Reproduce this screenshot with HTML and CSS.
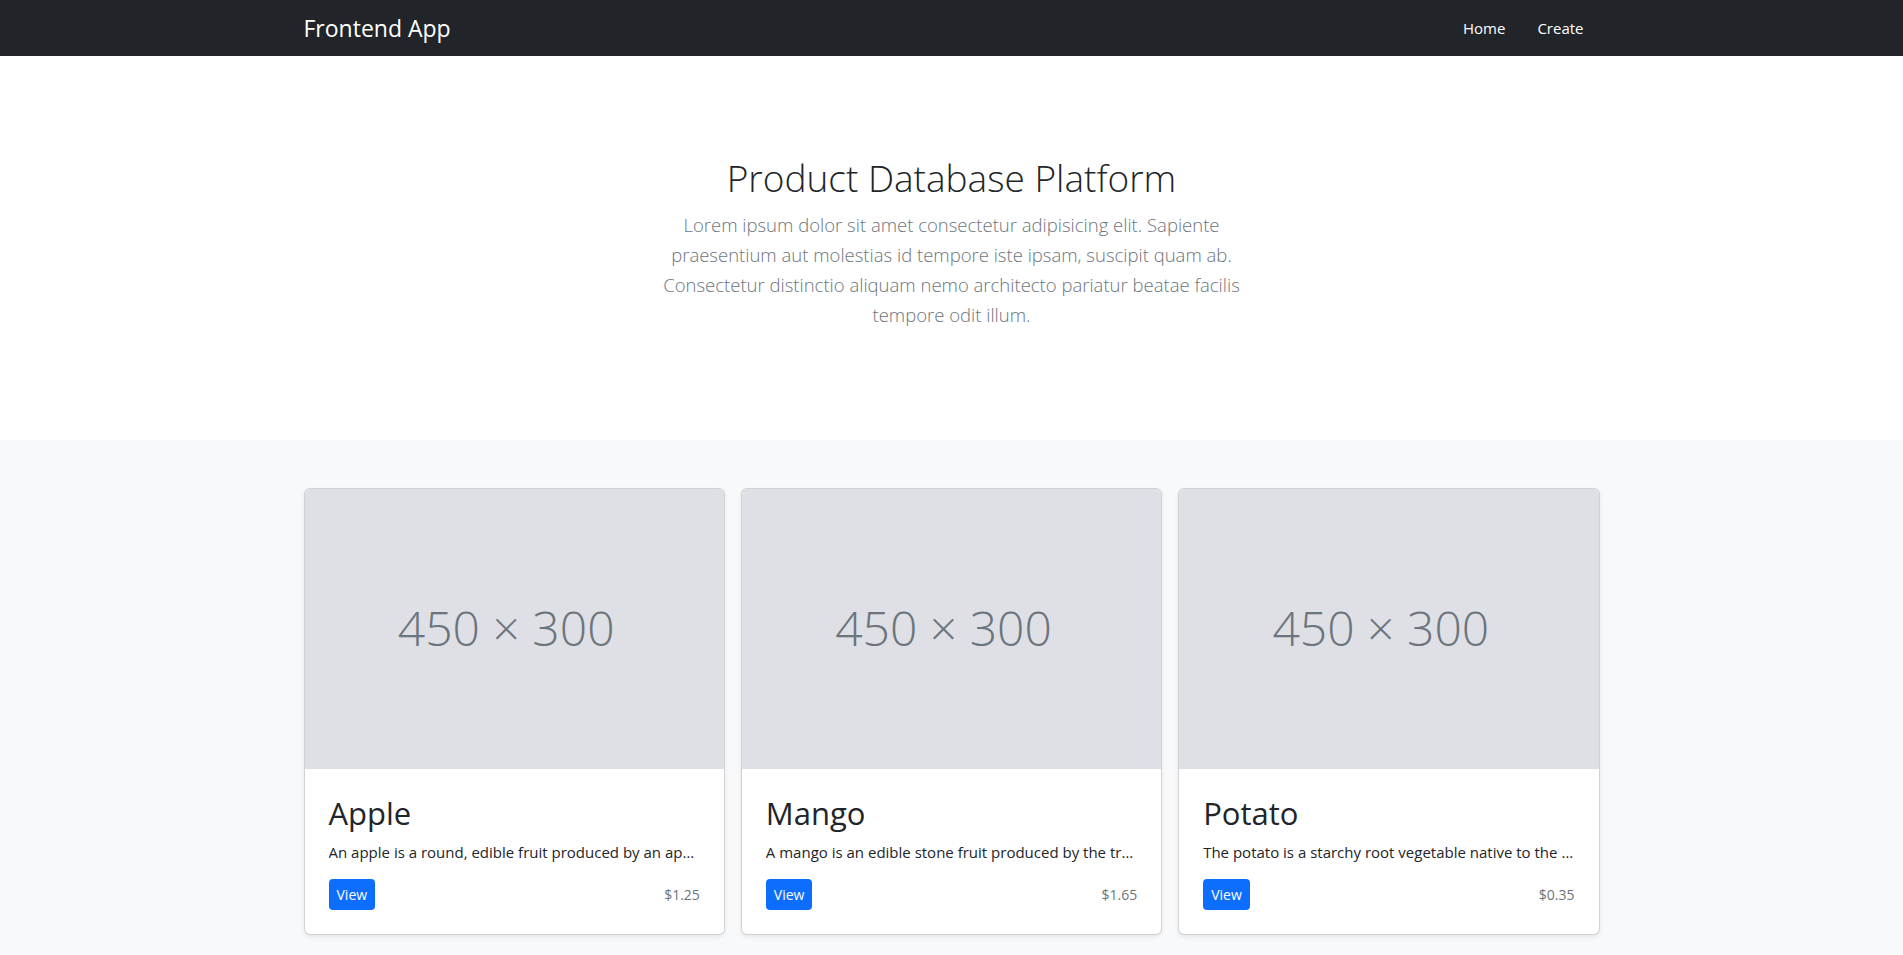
FILE: index.html
```html
<!DOCTYPE html>
<html lang="en">
<head>
<meta charset="utf-8">
<title>Frontend App</title>
<link rel="stylesheet" href="styles.css">
</head>
<body>
<header class="navbar">
  <div class="container nav-inner">
    <a class="brand" href="#">Frontend App</a>
    <nav class="nav-links">
      <a class="nav-link" href="#">Home</a>
      <a class="nav-link" href="#">Create</a>
    </nav>
  </div>
</header>
<main>
  <section class="hero container">
    <div class="hero-col">
      <h1 class="hero-title">Product Database Platform</h1>
      <p class="lead">Lorem ipsum dolor sit amet consectetur adipisicing elit. Sapiente praesentium aut molestias id tempore iste ipsam, suscipit quam ab. Consectetur distinctio aliquam nemo architecto pariatur beatae facilis tempore odit illum.</p>
    </div>
  </section>
  <div class="album">
    <div class="container">
      <div class="cards">
        <div class="card">
          <div class="card-img"><span>450 × 300</span></div>
          <div class="card-body">
            <h2 class="card-title">Apple</h2>
            <p class="card-text">An apple is a round, edible fruit produced by an apple tree (Malus domestica).</p>
            <div class="card-foot">
              <a class="btn" href="#">View</a>
              <small class="price">$1.25</small>
            </div>
          </div>
        </div>
        <div class="card">
          <div class="card-img"><span>450 × 300</span></div>
          <div class="card-body">
            <h2 class="card-title">Mango</h2>
            <p class="card-text">A mango is an edible stone fruit produced by the tropical tree Mangifera indica.</p>
            <div class="card-foot">
              <a class="btn" href="#">View</a>
              <small class="price">$1.65</small>
            </div>
          </div>
        </div>
        <div class="card">
          <div class="card-img"><span>450 × 300</span></div>
          <div class="card-body">
            <h2 class="card-title">Potato</h2>
            <p class="card-text">The potato is a starchy root vegetable native to the Americas.</p>
            <div class="card-foot">
              <a class="btn" href="#">View</a>
              <small class="price">$0.35</small>
            </div>
          </div>
        </div>
      </div>
    </div>
  </div>
</main>
</body>
</html>
```
FILE: styles.css
```css
* { box-sizing: border-box; }
html, body { margin: 0; padding: 0; }
body {
  font-family: "Open Sans", "Noto Sans", "Liberation Sans", sans-serif;
  font-size: 16px;
  line-height: 1.5;
  color: #212529;
  background: #fff;
}
a { text-decoration: none; }

.container {
  width: 1320px;
  margin: 0 auto;
  padding: 0 12px;
}

.navbar {
  background: #212529;
  padding: 8px 0;
}
.nav-inner {
  display: flex;
  align-items: center;
  justify-content: space-between;
}
.brand {
  color: #fff;
  font-size: 23px;
  line-height: 30px;
  padding: 5px 0;
}
.nav-links { display: flex; }
.nav-link {
  color: #fff;
  font-size: 15px;
  line-height: 24px;
  padding: 8px 16px;
}

.hero {
  padding-top: 98px;
  padding-bottom: 94px;
  text-align: center;
}
.hero-col {
  width: 660px;
  margin: 0 auto;
  padding: 0 12px;
}
.hero-title {
  margin: 0 0 8px;
  font-size: 37px;
  line-height: 48px;
  font-weight: 300;
}
.lead {
  margin: 0 0 16px;
  font-size: 18.5px;
  line-height: 30px;
  font-weight: 300;
  color: #6c757d;
}

.album {
  background: #f8f9fa;
  padding: 48px 0;
}
.cards {
  display: grid;
  grid-template-columns: repeat(3, 1fr);
  gap: 16px;
}
.card {
  background: #fff;
  border: 1px solid rgba(0,0,0,.175);
  border-radius: 6px;
  box-shadow: 0 2px 4px rgba(0,0,0,.075);
  overflow: hidden;
}
.card-img {
  aspect-ratio: 3 / 2;
  background: #dee0e5;
  display: flex;
  align-items: center;
  justify-content: center;
  padding-right: 16px;
  padding-bottom: 2px;
  color: #6c757d;
  font-size: 48px;
  font-weight: 300;
}
.card-body {
  padding: 26px 24px 24px;
}
.card-title {
  margin: 0 0 8px;
  font-size: 31px;
  line-height: 1.2;
  font-weight: 400;
}
.card-text {
  margin: 0 0 15px;
  font-size: 15px;
  line-height: 24px;
  white-space: nowrap;
  overflow: hidden;
  text-overflow: ellipsis;
}
.card-foot {
  display: flex;
  align-items: center;
  justify-content: space-between;
}
.btn {
  display: inline-block;
  background: #0d6efd;
  color: #fff;
  font-size: 14px;
  line-height: 21px;
  padding: 5px 8px;
  border-radius: 4px;
}
.price {
  color: #6c757d;
  font-size: 14px;
}
```
